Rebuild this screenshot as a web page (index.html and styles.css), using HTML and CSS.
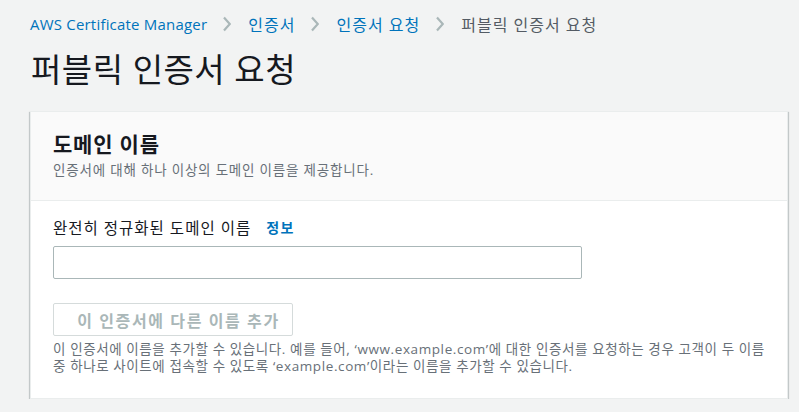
FILE: index.html
```html
<!DOCTYPE html>
<html lang="ko">
<head>
<meta charset="utf-8">
<link rel="stylesheet" href="styles.css">
</head>
<body>
<div class="page">
  <nav class="crumbs">
    <a class="crumb">AWS Certificate Manager</a>
    <span class="sep"><svg width="8" height="16" viewBox="0 0 8 16"><path d="M1 1.5 L6.8 8 L1 14.5" fill="none" stroke="#aab7b8" stroke-width="2.2"/></svg></span>
    <a class="crumb ko">인증서</a>
    <span class="sep"><svg width="8" height="16" viewBox="0 0 8 16"><path d="M1 1.5 L6.8 8 L1 14.5" fill="none" stroke="#aab7b8" stroke-width="2.2"/></svg></span>
    <a class="crumb ko">인증서 요청</a>
    <span class="sep"><svg width="8" height="16" viewBox="0 0 8 16"><path d="M1 1.5 L6.8 8 L1 14.5" fill="none" stroke="#aab7b8" stroke-width="2.2"/></svg></span>
    <span class="crumb ko current">퍼블릭 인증서 요청</span>
  </nav>
  <h1 class="title">퍼블릭 인증서 요청</h1>
  <section class="card">
    <header class="card-head">
      <h2 class="card-title">도메인 이름</h2>
      <p class="card-desc">인증서에 대해 하나 이상의 도메인 이름을 제공합니다.</p>
    </header>
    <div class="card-body">
      <div class="label-row">
        <span class="label">완전히 정규화된 도메인 이름</span>
        <a class="info">정보</a>
      </div>
      <input class="text-input" type="text">
      <button class="btn" disabled>이 인증서에 다른 이름 추가</button>
      <p class="help">이 인증서에 이름을 추가할 수 있습니다. 예를 들어, ‘www.example.com’에 대한 인증서를 요청하는 경우 고객이 두 이름 중 하나로 사이트에 접속할 수 있도록 ‘example.com’이라는 이름을 추가할 수 있습니다.</p>
    </div>
  </section>
</div>
</body>
</html>
```
FILE: styles.css
```css
html, body {
  margin: 0;
  padding: 0;
  background: #f2f3f3;
}
body {
  font-family: "Open Sans", "Noto Sans CJK KR", sans-serif;
  color: #16191f;
}
.page {
  padding: 11px 11px 0 30px;
}
.crumbs {
  display: flex;
  align-items: center;
  height: 26px;
  font-size: 15px;
  letter-spacing: 0.2px;
}
.crumb {
  color: #0073bb;
}
.crumb.ko {
  font-size: 16px;
  letter-spacing: 1px;
}
.crumb.current {
  color: #545b64;
}
.sep {
  display: flex;
  align-items: center;
  margin: 0 17px 0 16px;
}
.title {
  margin: 12px 0 0 1px;
  font-size: 33px;
  font-weight: 400;
  line-height: 42px;
  letter-spacing: 0.5px;
}
.card {
  margin-top: 20px;
  background: #fff;
  border: 1px solid #eaeded;
  box-shadow: 0 1px 1px 0 rgba(0, 28, 36, 0.3), 1px 1px 1px 0 rgba(0, 28, 36, 0.15), -1px 1px 1px 0 rgba(0, 28, 36, 0.15);
}
.card-head {
  background: #fafafa;
  border-bottom: 1px solid #eaeded;
  padding: 19px 22px 19px 22px;
}
.card-title {
  margin: 0;
  font-size: 21px;
  font-weight: 700;
  line-height: 26px;
  letter-spacing: 0.8px;
}
.card-desc {
  margin: 2px 0 0;
  font-size: 13.5px;
  line-height: 22px;
  letter-spacing: 0.8px;
  color: #687078;
}
.card-body {
  padding: 14px 22px 23px 22px;
}
.label-row {
  display: flex;
  align-items: center;
  gap: 15px;
  height: 24px;
}
.label {
  font-size: 15.5px;
  letter-spacing: 1px;
}
.info {
  color: #0073bb;
  font-size: 14px;
  font-weight: 700;
  letter-spacing: 1.5px;
}
.text-input {
  display: block;
  box-sizing: border-box;
  margin-top: 7px;
  width: 529px;
  height: 33px;
  border: 1px solid #aab7b8;
  border-radius: 2px;
  background: #fff;
}
.btn {
  display: block;
  box-sizing: border-box;
  margin-top: 24px;
  width: 240px;
  height: 33px;
  padding: 0 0 0 11px;
  border: 1px solid #d5dbdb;
  border-radius: 2px;
  background: #fff;
  color: #aab7b8;
  font-family: inherit;
  font-size: 16px;
  font-weight: 700;
  letter-spacing: 1.6px;
}
.help {
  margin: 5px 0 0;
  font-size: 13.5px;
  line-height: 17px;
  letter-spacing: 0.6px;
  color: #687078;
}
```
